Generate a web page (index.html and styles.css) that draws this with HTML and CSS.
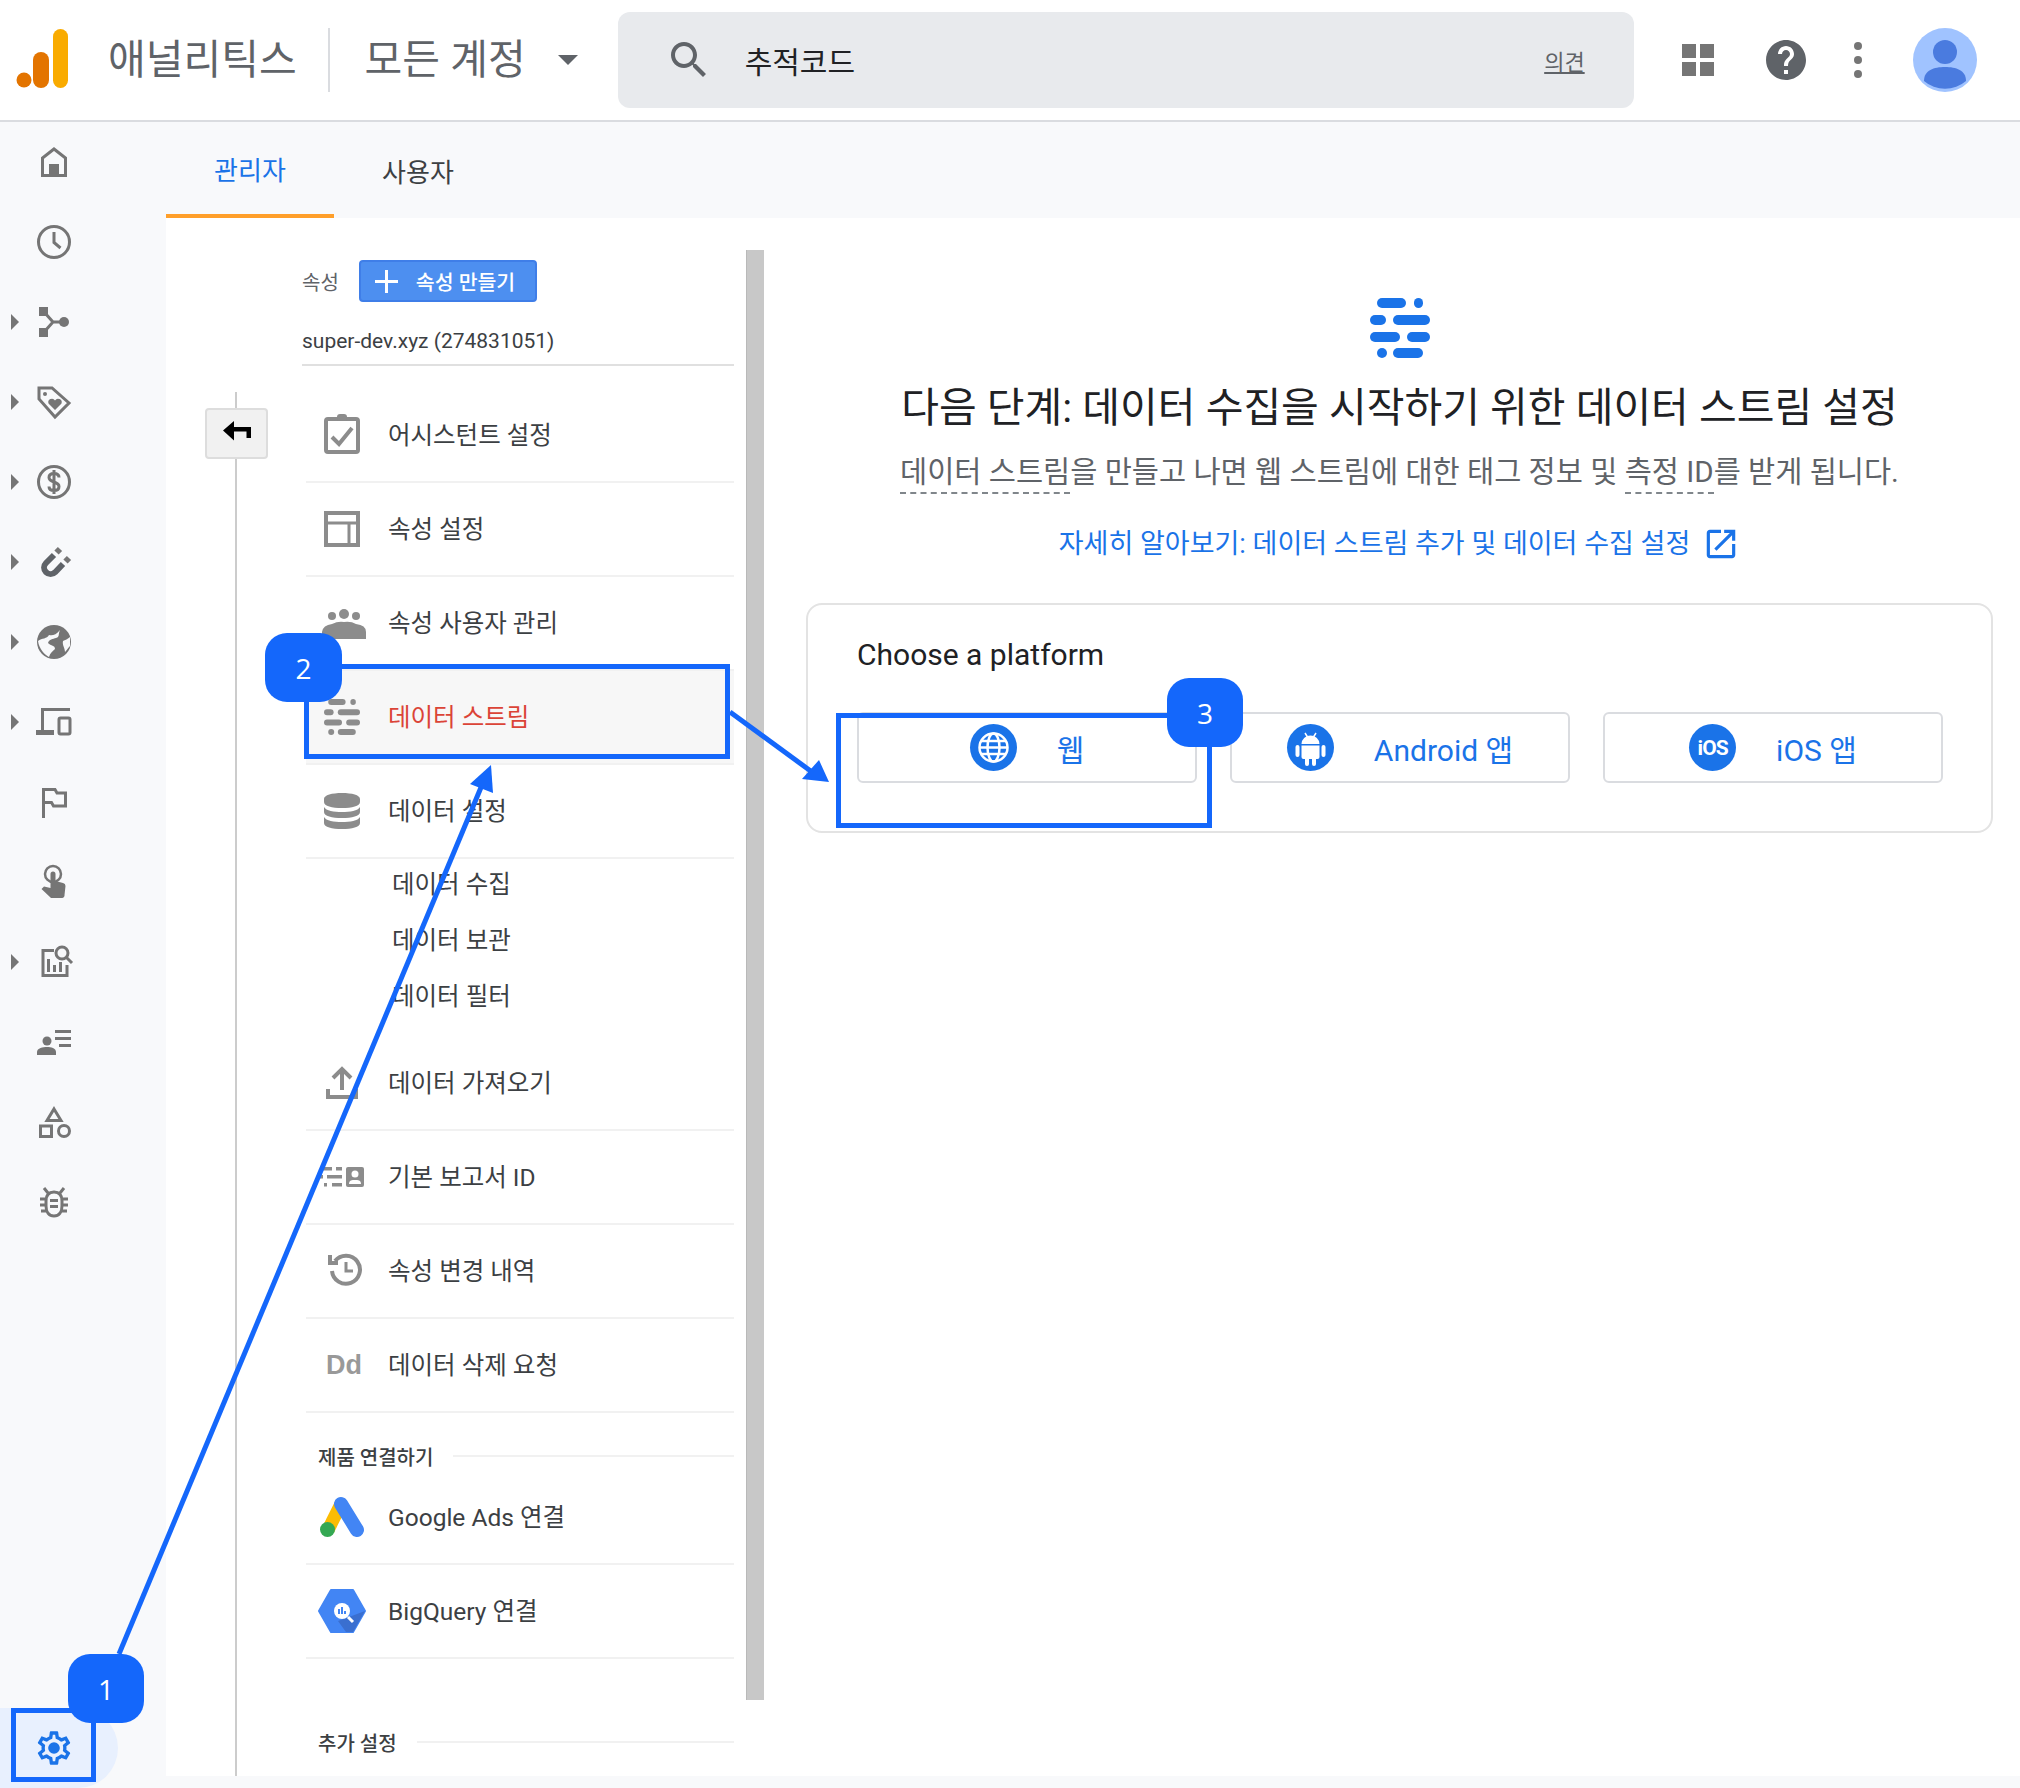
FILE: index.html
```html
<!DOCTYPE html>
<html lang="ko">
<head>
<meta charset="utf-8">
<title>애널리틱스</title>
<link rel="stylesheet" href="styles.css">
</head>
<body>
<svg class="defs" width="0" height="0" aria-hidden="true">
  <symbol id="stream" viewBox="0 0 60 60">
    <rect x="7" y="0" width="29" height="10" rx="5"/><rect x="44" y="0" width="9" height="10" rx="4.5"/>
    <rect x="0" y="17" width="16" height="10" rx="5"/><rect x="23" y="17" width="37" height="10" rx="5"/>
    <rect x="0" y="34" width="30" height="10" rx="5"/><rect x="37" y="34" width="23" height="10" rx="5"/>
    <rect x="7" y="50" width="10" height="10" rx="5"/><rect x="23" y="50" width="30" height="10" rx="5"/>
  </symbol>
</svg>
<div class="app">
  <header class="topbar">
    <svg class="logo" width="52" height="60" viewBox="0 0 52 60"><circle cx="8" cy="51" r="7.5" fill="#e37400"/><rect x="17" y="23" width="16" height="36" rx="8" fill="#e37400"/><rect x="37" y="0" width="15" height="59" rx="7.5" fill="#f9ab00"/></svg>
    <span class="brand">애널리틱스</span>
    <span class="divider"></span>
    <span class="account">모든 계정</span>
    <span class="account-caret"></span>
    <div class="search">
      <svg width="48" height="48" viewBox="0 0 24 24" fill="#5f6368"><path d="M15.5 14h-.79l-.28-.27C15.41 12.59 16 11.11 16 9.5 16 5.91 13.09 3 9.5 3S3 5.91 3 9.5 5.91 16 9.5 16c1.61 0 3.09-.59 4.23-1.57l.27.28v.79l5 4.99L20.49 19l-4.99-5zm-6 0C7.01 14 5 11.99 5 9.5S7.01 5 9.5 5 14 7.01 14 9.5 11.99 14 9.5 14z"/></svg>
      <span class="search-text">추적코드</span>
      <a class="feedback">의견</a>
    </div>
    <div class="top-actions">
      <span class="apps"><i></i><i></i><i></i><i></i></span>
      <svg width="48" height="48" viewBox="0 0 24 24" fill="#5f6368"><path d="M12 2C6.48 2 2 6.48 2 12s4.48 10 10 10 10-4.48 10-10S17.52 2 12 2zm1 17h-2v-2h2v2zm2.07-7.75l-.9.92C13.45 12.9 13 13.5 13 15h-2v-.5c0-1.1.45-2.1 1.17-2.83l1.24-1.26c.37-.36.59-.86.59-1.41 0-1.1-.9-2-2-2s-2 .9-2 2H8c0-2.21 1.79-4 4-4s4 1.79 4 4c0 .88-.36 1.68-.93 2.25z"/></svg>
      <span class="more"><i></i><i></i><i></i></span>
      <svg class="avatar" width="64" height="64" viewBox="0 0 64 64"><circle cx="32" cy="32" r="32" fill="#a0c3ff"/><circle cx="32" cy="24" r="12" fill="#4a7bdf"/><path d="M11 53 C11 42 21 39 32 39 C43 39 53 42 53 53 A32 32 0 0 1 11 53Z" fill="#4a7bdf"/></svg>
    </div>
  </header>
  <div class="shell">
    <nav class="nav">
      <a class="nav-item"><svg viewBox="0 0 36 36"><path class="s" d="M18 5 L29.500 14 V31.500 H6.500 V14 Z"/><rect class="f" x="13" y="20" width="10" height="12"/></svg></a>
      <a class="nav-item"><svg viewBox="0 0 36 36"><circle class="s" cx="18" cy="18" r="15.500"/><path class="s" d="M18 8 V18.500 L24.500 24"/></svg></a>
      <a class="nav-item expand"><svg viewBox="0 0 36 36"><rect class="f" x="3" y="3" width="9" height="9"/><rect class="f" x="3" y="24" width="9" height="9"/><circle class="f" cx="28" cy="18" r="5"/><path class="s" d="M9 9 L17 18 L9 27 M17 18 H27"/></svg></a>
      <a class="nav-item expand"><svg viewBox="0 0 36 36"><path class="s" d="M3 4 H16 L33 19 L19 33 L3 15 Z"/><circle class="f" cx="9" cy="10" r="2"/><path class="f" d="M19 26 L12.500 19.500 A3.600 3.600 0 0 1 19 16.500 A3.600 3.600 0 0 1 25.500 19.500 Z"/></svg></a>
      <a class="nav-item expand"><svg viewBox="0 0 36 36"><circle class="s" cx="18" cy="18" r="15.500"/><path class="s" d="M23 13.500 C23 10.500 20.500 9.500 18 9.500 C15 9.500 13 11 13 13.500 C13 19 23 17 23 22.500 C23 25 21 26.500 18 26.500 C15.500 26.500 13 25.500 13 22.500 M18 6 V30"/></svg></a>
      <a class="nav-item expand"><svg viewBox="0 0 36 36"><path class="magnet" d="M18 11 L10 19 A6.500 6.500 0 0 0 19.200 28.200 L27 20"/><path class="magnet m2" d="M20.500 8.500 L24 5 M29.500 17.500 L33 14"/></svg></a>
      <a class="nav-item expand"><svg viewBox="0 0 36 36"><circle class="f" cx="18" cy="18" r="17"/><path fill="#f8f9fb" d="M2 17 C6 14 11 15 13 11 C16 12 20 11 24 6 C22 10 24 13 20 14 C17 15 13 15 12 19 C15 22 19 21 19 25 C17 27 14 29 13 33 C9 31 3 25 2 17Z M27 17 C29 16 32 15 34 13 L34 22 C32 24 31 26 29 28 C29 24 26 21 27 17Z"/></svg></a>
      <a class="nav-item expand"><svg viewBox="0 0 36 36"><path class="s" d="M34 5.500 H6.500 V26"/><rect class="f" x="0" y="26" width="18" height="5"/><rect class="s" x="23" y="14" width="11" height="16" rx="1.500"/></svg></a>
      <a class="nav-item"><svg viewBox="0 0 36 36"><path class="s" d="M7.500 34 V5.500 H19 L21 9 H29.500 V22 H17.500 L15.500 18.500 H8"/></svg></a>
      <a class="nav-item"><svg viewBox="0 0 36 36"><circle class="s thin" cx="17" cy="10" r="8"/><path class="f" d="M14.500 10 A2.500 2.500 0 0 1 19.500 10 V17 L27 19 A3 3 0 0 1 29.500 22 L28.500 31 A2.500 2.500 0 0 1 26 34 H15 L5.500 25 L8 22.500 L14.500 24 Z"/></svg></a>
      <a class="nav-item expand"><svg viewBox="0 0 36 36"><path class="s" d="M18 6.500 H7 V31.500 H31 V21"/><rect class="f" x="11" y="15" width="3" height="13"/><rect class="f" x="17" y="21" width="3" height="7"/><rect class="f" x="23" y="18" width="3" height="10"/><circle class="s" cx="26" cy="9" r="6"/><path class="s" d="M30.500 13.500 L36 19"/></svg></a>
      <a class="nav-item"><svg viewBox="0 0 36 36"><circle class="f" cx="11" cy="17" r="4.500"/><path class="f" d="M1 31 V28 C1 24 7 23 11 23 C15 23 20 24 20 28 V31 Z"/><rect class="f" x="19" y="6" width="16" height="3"/><rect class="f" x="19" y="13" width="16" height="3"/><rect class="f" x="23" y="20" width="12" height="3"/></svg></a>
      <a class="nav-item"><svg viewBox="0 0 36 36"><path class="s" d="M18 5 L25 16.500 H11 Z"/><rect class="s" x="4.500" y="22" width="11" height="10.500"/><circle class="s" cx="28" cy="27" r="5.500"/></svg></a>
      <a class="nav-item"><svg viewBox="0 0 36 36"><path class="s" d="M18 8 C24 8 26 12 26 17 V22 C26 28 23 32 18 32 C13 32 10 28 10 22 V17 C10 12 12 8 18 8 Z M12 9 L8 4 M24 9 L28 4 M10 15 H4 M32 15 H26 M10 21 H4 M32 21 H26 M10 27 H5 M31 27 H26"/><rect class="f" x="14" y="15" width="8" height="3"/><rect class="f" x="14" y="21" width="8" height="3"/></svg></a>
      <a class="nav-item gear"><svg viewBox="0 0 24 24" fill="#1a73e8"><path d="M19.43 12.98c.04-.32.07-.64.07-.98 0-.34-.03-.66-.07-.98l2.11-1.65c.19-.15.24-.42.12-.64l-2-3.46c-.09-.16-.26-.25-.44-.25-.06 0-.12.01-.17.03l-2.49 1c-.52-.4-1.08-.73-1.69-.98l-.38-2.65C14.46 2.18 14.25 2 14 2h-4c-.25 0-.46.18-.49.42l-.38 2.65c-.61.25-1.17.59-1.69.98l-2.49-1c-.06-.02-.12-.03-.18-.03-.17 0-.34.09-.43.25l-2 3.46c-.13.22-.07.49.12.64l2.11 1.65c-.04.32-.07.65-.07.98 0 .33.03.66.07.98l-2.11 1.65c-.19.15-.24.42-.12.64l2 3.46c.09.16.26.25.44.25.06 0 .12-.01.17-.03l2.49-1c.52.4 1.08.73 1.69.98l.38 2.65c.03.24.24.42.49.42h4c.25 0 .46-.18.49-.42l.38-2.65c.61-.25 1.17-.59 1.69-.98l2.49 1c.06.02.12.03.18.03.17 0 .34-.09.43-.25l2-3.46c.12-.22.07-.49-.12-.64l-2.11-1.65zm-1.98-1.71c.04.31.05.52.05.73 0 .21-.02.43-.05.73l-.14 1.13.89.7 1.08.84-.7 1.21-1.27-.51-1.04-.42-.9.68c-.43.32-.84.56-1.25.73l-1.06.43-.16 1.13-.2 1.35h-1.4l-.19-1.35-.16-1.13-1.06-.43c-.43-.18-.83-.41-1.23-.71l-.91-.7-1.06.43-1.27.51-.7-1.21 1.08-.84.89-.7-.14-1.13c-.03-.31-.05-.54-.05-.74s.02-.43.05-.73l.14-1.13-.89-.7-1.08-.84.7-1.21 1.27.51 1.04.42.9-.68c.43-.32.84-.56 1.25-.73l1.06-.43.16-1.13.2-1.35h1.39l.19 1.35.16 1.13 1.06.43c.43.18.83.41 1.23.71l.91.7 1.06-.43 1.27-.51.7 1.21-1.07.85-.89.7.14 1.13zM12 8.500a3.500 3.500 0 1 0 0 7 3.500 3.500 0 0 0 0-7z"/></svg></a>
    </nav>
    <main class="main">
      <div class="tabs">
        <a class="tab active">관리자</a>
        <a class="tab">사용자</a>
      </div>
      <div class="content">
        <div class="rail">
          <span class="rail-line"></span>
          <button class="back"><svg width="28" height="20" viewBox="0 0 28 20"><path d="M0 9.500 L11 0 V6 H28 V17 H23.500 V10.500 H11 V19.500 Z"/></svg></button>
        </div>
        <section class="column">
          <div class="prop-head">
            <span class="prop-label">속성</span>
            <button class="create"><span class="plus"></span>속성 만들기</button>
          </div>
          <div class="prop-name">super-dev.xyz (274831051)</div>
          <ul class="list">
            <li class="row"><svg class="row-icon" viewBox="0 0 48 48"><rect class="ls" x="8" y="8" width="32" height="33" rx="2"/><rect class="lf" x="19" y="3" width="10" height="7" rx="3"/><path class="ls" d="M14 26 L21 33 L34 17"/></svg><span>어시스턴트 설정</span></li>
            <li class="row"><svg class="row-icon" viewBox="0 0 48 48"><rect class="ls" x="8" y="8" width="32" height="32"/><path class="ls t" d="M8 18 H40 M31 18 V40"/></svg><span>속성 설정</span></li>
            <li class="row"><svg class="row-icon" viewBox="0 0 48 48"><circle class="lf" cx="14" cy="17" r="4"/><circle class="lf" cx="26" cy="15" r="5"/><circle class="lf" cx="38" cy="17" r="4"/><path class="lf" d="M4 40 V33 Q5 26 14 25 Q20 22 26 23 Q33 22 38 25 Q48 26 48 33 V40 Z"/></svg><span>속성 사용자 관리</span></li>
            <li class="row current"><svg class="row-icon" viewBox="0 0 48 48"><use class="lf" href="#stream" x="6" y="6" width="36" height="36"/></svg><span>데이터 스트림</span></li>
            <li class="row"><svg class="row-icon" viewBox="0 0 48 48"><path class="lf" d="M6 12 C6 8 14 6 24 6 C34 6 42 8 42 12 V15 C42 19 34 21 24 21 C14 21 6 19 6 15 Z M6 20 C8 24 16 25 24 25 C32 25 40 24 42 20 V25 C42 29 34 31 24 31 C14 31 6 29 6 25 Z M6 30 C8 34 16 35 24 35 C32 35 40 34 42 30 V36 C42 40 34 42 24 42 C14 42 6 40 6 36 Z"/></svg><span>데이터 설정</span></li>
            <li class="sub">데이터 수집</li>
            <li class="sub">데이터 보관</li>
            <li class="sub last">데이터 필터</li>
            <li class="row"><svg class="row-icon" viewBox="0 0 48 48"><path class="ls" d="M24 10 V31 M15 19 L24 10 L33 19 M10 30 V38 H38 V30"/></svg><span>데이터 가져오기</span></li>
            <li class="row"><svg class="row-icon" viewBox="0 0 48 48"><path class="lf" d="M2 14 H14 V17.500 H2 Z M18 14 H24 V17.500 H18 Z M2 22 H5 V25.500 H2 Z M9 22 H24 V25.500 H9 Z M6 30 H9 V33.500 H6 Z M14 30 H24 V33.500 H14 Z"/><rect class="lf" x="28" y="14" width="18" height="20" rx="2"/><circle cx="37" cy="21" r="3.500" fill="#fff"/><path d="M31 31 C31 27 34 27 37 27 C40 27 43 27 43 31 Z" fill="#fff"/></svg><span>기본 보고서 ID</span></li>
            <li class="row"><svg class="row-icon" viewBox="0 0 48 48"><path class="ls" d="M17 14 A14 14 0 1 1 14 24 M12 8 V16 H20"/><path class="ls t" d="M28 15 V24 H35"/></svg><span>속성 변경 내역</span></li>
            <li class="row"><span class="dd">Dd</span><span>데이터 삭제 요청</span></li>
            <li class="section-head"><span>제품 연결하기</span><i></i></li>
            <li class="row"><svg class="row-icon" viewBox="0 0 48 48"><path d="M23 11 L10 37" stroke="#fbbc04" stroke-width="13" fill="none"/><path d="M23 11 L39 37" stroke="#4285f4" stroke-width="14" stroke-linecap="round" fill="none"/><circle cx="9.500" cy="36.500" r="7.500" fill="#34a853"/></svg><span>Google Ads 연결</span></li>
            <li class="row"><svg class="row-icon" viewBox="0 0 48 48"><path d="M13 3 H35 L47 24 L35 45 H13 L1 24 Z" fill="#4285f4" stroke="#4285f4" stroke-width="2" stroke-linejoin="round"/><path d="M31 30 L47 24 L35 45 H28 L20 34 Z" fill="#3a6fd0"/><circle cx="24" cy="24" r="8" fill="#fff"/><path d="M30 30 L35 35" stroke="#fff" stroke-width="3"/><path d="M21 22 V27 M24 20 V27 M27 24 V27" stroke="#4285f4" stroke-width="2"/></svg><span>BigQuery 연결</span></li>
            <li class="section-head more-head"><span>추가 설정</span><i></i></li>
          </ul>
        </section>
        <div class="scrollbar"></div>
        <section class="detail">
          <svg class="stream-big" width="60" height="60"><use href="#stream"/></svg>
          <h1 class="title">다음 단계: 데이터 수집을 시작하기 위한 데이터 스트림 설정</h1>
          <p class="lede"><span class="dash">데이터 스트림</span>을 만들고 나면 웹 스트림에 대한 태그 정보 및 <span class="dash">측정 ID</span>를 받게 됩니다.</p>
          <a class="learn">자세히 알아보기: 데이터 스트림 추가 및 데이터 수집 설정<svg width="38" height="38" viewBox="0 0 24 24" fill="#1a73e8"><path d="M19 19H5V5h7V3H5c-1.110 0-2 .9-2 2v14c0 1.100.89 2 2 2h14c1.100 0 2-.9 2-2v-7h-2v7zM14 3v2h3.590l-9.830 9.830 1.410 1.410L19 6.410V10h2V3h-7z"/></svg></a>
          <div class="platforms">
            <h2 class="platforms-title">Choose a platform</h2>
            <div class="platform-grid">
              <button class="platform"><span class="disc"><svg width="47" height="47" viewBox="0 0 47 47" fill="none" stroke="#fff" stroke-width="2.500"><circle cx="23.500" cy="23.500" r="14"/><ellipse cx="23.500" cy="23.500" rx="6" ry="14"/><path d="M9.500 23.500 H37.500 M11 17 H36 M11 30 H36"/></svg></span>웹</button>
              <button class="platform"><span class="disc"><svg width="47" height="47" viewBox="0 0 47 47" fill="#fff"><path d="M14.500 20 A9 8.500 0 0 1 32.500 20 Z"/><path d="M18 9 L20.500 13 M29 9 L26.500 13" stroke="#fff" stroke-width="1.500"/><path d="M14.500 21.500 H32.500 V33 A2 2 0 0 1 30.500 35 H16.500 A2 2 0 0 1 14.500 33 Z"/><rect x="8.500" y="21" width="4" height="12" rx="2"/><rect x="34.500" y="21" width="4" height="12" rx="2"/><rect x="18" y="33" width="4" height="9" rx="2"/><rect x="25" y="33" width="4" height="9" rx="2"/></svg></span>Android 앱</button>
              <button class="platform"><span class="disc ios">iOS</span>iOS 앱</button>
            </div>
          </div>
        </section>
      </div>
    </main>
  </div>
</div>
<svg class="arrows" width="2020" height="1788" viewBox="0 0 2020 1788">
  <path class="arrow-line" d="M119 1654 L482 785"/>
  <polygon class="arrow-head" points="491,765 470,784 493,793"/>
  <path class="arrow-line" d="M730 712 L812 772"/>
  <polygon class="arrow-head" points="829,782 802,779 819,760"/>
</svg>
<div class="mark mark-1"></div>
<div class="mark mark-2"></div>
<div class="mark mark-3"></div>
<div class="badge badge-1">1</div>
<div class="badge badge-2">2</div>
<div class="badge badge-3">3</div>
</body>
</html>
```

FILE: styles.css
```css
* { box-sizing: border-box; }
html, body { margin: 0; padding: 0; }
body {
  width: 2020px; height: 1788px; overflow: hidden; position: relative;
  background: #f8f9fb; color: #3c4043;
  font-family: Roboto, "Noto Sans CJK KR", sans-serif;
}
.defs { position: absolute; }
.app { display: flex; flex-direction: column; height: 1788px; }

/* top bar */
.topbar { height: 122px; flex: none; background: #fff; border-bottom: 2px solid #dadce0; display: flex; align-items: center; padding-left: 16px; }
.logo { flex: none; margin-top: -2px; }
.brand { margin-left: 40px; font-size: 41px; line-height: 48px; color: #5f6368; white-space: nowrap; }
.divider { width: 2px; height: 64px; background: #dadce0; margin: 0 35px 0 31px; }
.account { font-size: 41px; line-height: 48px; color: #5f6368; white-space: nowrap; }
.account-caret { width: 0; height: 0; border-left: 10px solid transparent; border-right: 10px solid transparent; border-top: 10px solid #5f6368; margin-left: 32px; margin-right: 40px; }
.search { width: 1016px; height: 96px; background: #e8eaed; border-radius: 12px; display: flex; align-items: center; padding-left: 47px; padding-right: 49px; }
.search-text { margin-left: 32px; font-size: 30px; color: #202124; }
.feedback { margin-left: auto; font-size: 22px; color: #5f6368; text-decoration: underline; }
.top-actions { display: flex; align-items: center; margin-left: 48px; }
.apps { display: grid; grid-template-columns: 14px 14px; grid-auto-rows: 14px; gap: 4px; }
.apps i { background: #757575; }
.top-actions > svg:nth-child(2) { margin-left: 48px; }
.more { display: flex; flex-direction: column; gap: 6px; margin-left: 44px; }
.more i { width: 8px; height: 8px; border-radius: 50%; background: #757575; }
.avatar { margin-left: 51px; }

/* shell */
.shell { flex: 1; display: flex; min-height: 0; }
.nav { width: 166px; flex: none; display: flex; flex-direction: column; }
.nav-item { height: 80px; flex: none; display: flex; align-items: center; padding-left: 11px; }
.nav-item::before { content: ""; width: 8px; height: 16px; margin-right: 17px; clip-path: polygon(0 0, 100% 50%, 0 100%); }
.nav-item.expand::before { background: #757575; }
.nav-item svg { width: 36px; height: 36px; flex: none; overflow: visible; }
.nav-item .s { fill: none; stroke: #757575; stroke-width: 3; }
.nav-item .s.thin { stroke-width: 2.5; }
.nav-item .f { fill: #757575; }
.magnet { fill: none; stroke: #5f6368; stroke-width: 6; }
.magnet.m2 { stroke: #757575; }
.nav-item.gear { margin-top: auto; width: 118px; background: #e8f0fe; border-radius: 0 40px 40px 0; }
.nav-item.gear svg { width: 40px; height: 40px; margin-left: -2px; }

/* main */
.main { flex: 1; display: flex; flex-direction: column; padding-bottom: 12px; min-width: 0; }
.tabs { height: 96px; flex: none; display: flex; }
.tab { width: 168px; display: flex; align-items: center; justify-content: center; font-size: 26px; color: #3c4043; }
.tab.active { color: #1a73e8; border-bottom: 4px solid #ff9f2a; }
.content { flex: 1; background: #fff; display: flex; overflow: hidden; position: relative; }

.rail { width: 136px; flex: none; padding-top: 174px; position: relative; }
.rail-line { display: block; margin-left: 69px; width: 2px; height: 100%; background: #ccc; }
.back { position: absolute; left: 39px; top: 190px; width: 63px; height: 51px; padding: 0; background: #f1f1f1; border: 2px solid #ddd; border-radius: 4px; display: flex; align-items: center; justify-content: center; }
.back svg { margin-top: -6px; }

.column { width: 432px; flex: none; padding-top: 42px; }
.prop-head { display: flex; align-items: center; gap: 20px; height: 42px; }
.prop-label { font-size: 20px; color: #5f6368; }
.create { width: 178px; height: 42px; padding: 0 0 0 14px; background: #4d8ff0; border: 2px solid #3f7ee8; border-radius: 4px; color: #fff; font: 500 20.500px Roboto, "Noto Sans CJK KR", sans-serif; display: flex; align-items: center; gap: 18px; white-space: nowrap; }
.plus { width: 23px; height: 23px; flex: none; background: linear-gradient(#fff, #fff) center/100% 3px no-repeat, linear-gradient(#fff, #fff) center/3px 100% no-repeat; }
.prop-name { height: 64px; padding-top: 24px; font-size: 21px; line-height: 30px; color: #3c4043; border-bottom: 2px solid #e0e0e0; white-space: nowrap; }
.list { list-style: none; margin: 23px 0 0 4px; padding: 0; }
.row { height: 94px; display: flex; align-items: center; border-bottom: 2px solid #f1f1f1; font-size: 24.500px; color: #3c4043; padding-left: 12px; white-space: nowrap; }
.row-icon { width: 48px; height: 48px; flex: none; margin-right: 22px; overflow: visible; }
.row > span:last-child { margin-top: -3px; }
.row.current { background: #f7f7f7; color: #db4437; }
.ls { fill: none; stroke: #8c8c8c; stroke-width: 4; }
.ls.t { stroke-width: 3; }
.lf { fill: #8c8c8c; }
.dd { width: 48px; flex: none; margin-right: 22px; font: bold 27px "Liberation Sans", sans-serif; color: #999; text-align: center; padding-left: 4px; }
.sub { height: 56px; padding-left: 86px; font-size: 24.500px; line-height: 52px; color: #3c4043; }
.sub.last { margin-bottom: 10px; }
.section-head { height: 30px; margin: 28px 0 0 12px; display: flex; align-items: center; gap: 20px; font-size: 20px; font-weight: 500; color: #3c4043; white-space: nowrap; }
.section-head i { flex: 1; height: 2px; background: #f1f1f1; }
.more-head { margin-top: 68px; }

.scrollbar { width: 18px; flex: none; height: 1450px; margin: 32px 0 0 12px; background: #c8c8c8; border-left: 1px solid #b9b9b9; }

.detail { width: 1187px; flex: none; margin-left: 42px; display: flex; flex-direction: column; align-items: center; padding-top: 80px; }
.stream-big { fill: #1a73e8; flex: none; margin-left: 0; }
.title { margin: 24px 0 0; font-size: 41px; line-height: 52px; font-weight: 400; color: #202124; white-space: nowrap; }
.lede { margin: 16px 0 0; font-size: 29.500px; line-height: 44px; color: #5f6368; white-space: nowrap; }
.dash { border-bottom: 2px dashed #80868b; padding-bottom: 3px; }
.learn { margin-top: 28px; display: flex; align-items: center; gap: 12px; font-size: 27px; line-height: 44px; color: #1a73e8; white-space: nowrap; }
.platforms { align-self: stretch; margin-top: 37px; height: 230px; border: 2px solid #e3e3e3; border-radius: 16px; padding: 28px 0 0 49px; }
.platforms-title { margin: 0; font-size: 30px; line-height: 44px; font-weight: 400; color: #202124; }
.platform-grid { display: grid; grid-template-columns: repeat(3, 340px); gap: 33px; margin-top: 35px; }
.platform { height: 71px; background: #fff; border: 2px solid #dadce0; border-radius: 6px; font: 400 30px Roboto, "Noto Sans CJK KR", sans-serif; color: #1a73e8; display: flex; align-items: center; justify-content: center; gap: 40px; padding: 0; white-space: nowrap; }
.disc { width: 47px; height: 47px; flex: none; border-radius: 50%; background: #1a73e8; display: flex; align-items: center; justify-content: center; }
.disc.ios { font-size: 21px; font-weight: 700; letter-spacing: -1px; color: #fff; }

/* annotation overlay */
.arrows { position: absolute; left: 0; top: 0; z-index: 5; pointer-events: none; }
.arrow-line { stroke: #1467fb; stroke-width: 5; fill: none; }
.arrow-head { fill: #1467fb; }
.mark { position: absolute; z-index: 6; border: 5px solid #1467fb; }
.mark-1 { left: 11px; top: 1708px; width: 85px; height: 74px; }
.mark-2 { left: 304px; top: 664px; width: 426px; height: 95px; }
.mark-3 { left: 836px; top: 713px; width: 376px; height: 115px; }
.badge { position: absolute; z-index: 7; background: #1467fb; color: #fff; font: 400 28px "Open Sans", sans-serif; border-radius: 22px; display: flex; align-items: center; justify-content: center; }
.badge-1 { left: 68px; top: 1654px; width: 76px; height: 69px; }
.badge-2 { left: 265px; top: 633px; width: 77px; height: 69px; }
.badge-3 { left: 1167px; top: 678px; width: 76px; height: 69px; }
```
